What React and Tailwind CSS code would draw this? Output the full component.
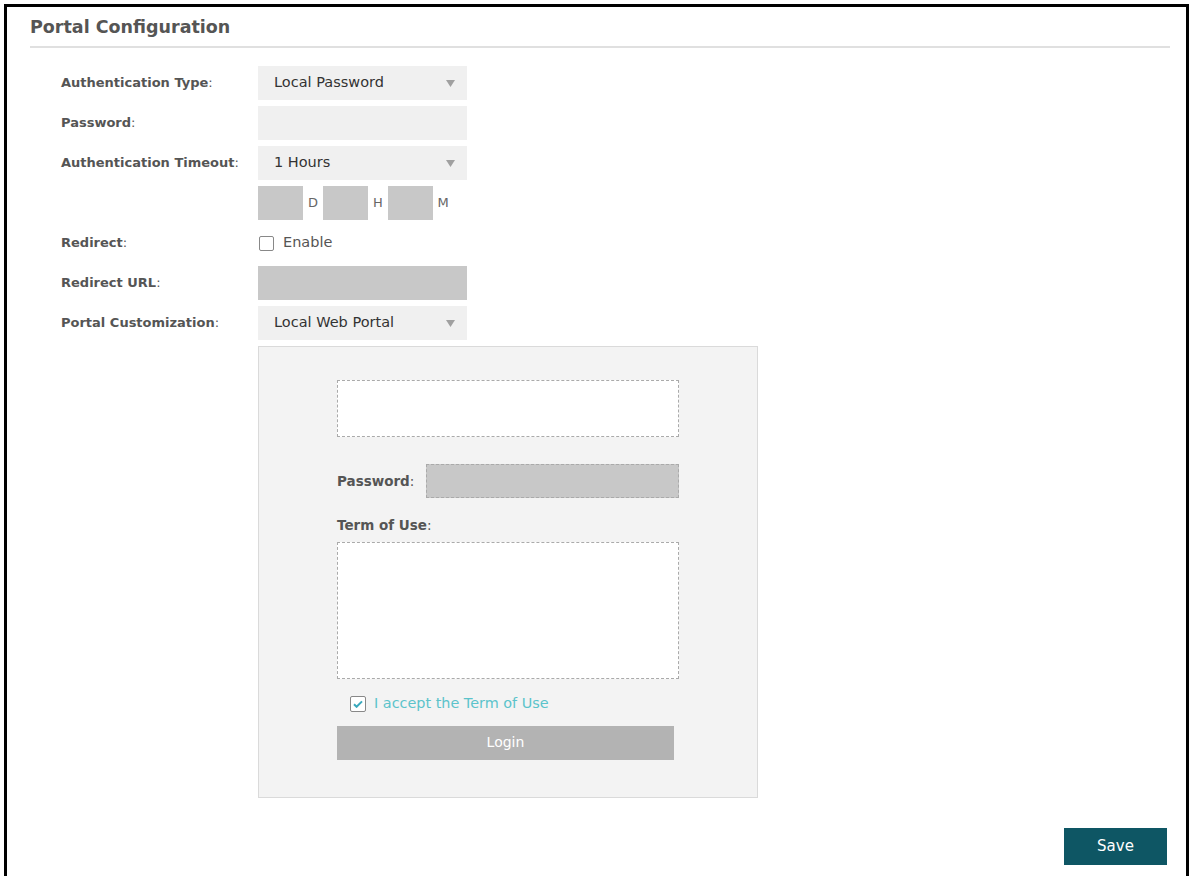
import React from 'react';

const font = { fontFamily: '"DejaVu Sans", Verdana, sans-serif' };

const Caret = () => (
  <svg width="9" height="7" viewBox="0 0 9 7" className="shrink-0">
    <path d="M0 0h9L4.5 7z" fill="#a0a0a0" />
  </svg>
);

const Select = ({ value }) => (
  <div className="flex h-[34px] w-[209px] items-center justify-between bg-[#f0f0f0] pl-4 pr-3 text-[14.5px] text-[#333]">
    <span>{value}</span>
    <Caret />
  </div>
);

const Row = ({ label, children, className = '' }) => (
  <div className={`flex items-center ${className}`}>
    <div className="w-[197px] shrink-0 text-[13px] font-bold text-[#555]">
      {label}
      {label && <span className="font-normal">:</span>}
    </div>
    {children}
  </div>
);

const App = () => {
  return (
    <div className="h-[876px] overflow-hidden bg-white pl-[4px] pr-px pt-[4px]" style={font}>
      <div className="relative h-[872px] border-l-[3px] border-r-[3px] border-t-[3px] border-black pl-[23px] pr-[16px] pt-[11px]">
        <h1 className="border-b-2 border-[#e0e0e0] pb-[10px] text-[17.5px] font-bold leading-[18px] text-[#555]">
          Portal Configuration
        </h1>

        <div className="flex flex-col gap-[6px] pl-[31px] pt-[18px]">
          <Row label="Authentication Type">
            <Select value="Local Password" />
          </Row>
          <Row label="Password">
            <div className="h-[34px] w-[209px] bg-[#f0f0f0]" />
          </Row>
          <Row label="Authentication Timeout">
            <Select value="1 Hours" />
          </Row>
          <Row label="">
            <div className="flex items-center text-[13px] text-[#666]">
              <div className="h-[34px] w-[45px] bg-[#c8c8c8]" />
              <span className="w-[20px] text-center">D</span>
              <div className="h-[34px] w-[45px] bg-[#c8c8c8]" />
              <span className="w-[20px] text-center">H</span>
              <div className="h-[34px] w-[45px] bg-[#c8c8c8]" />
              <span className="w-[20px] text-center">M</span>
            </div>
          </Row>
          <Row label="Redirect" className="h-[34px]">
            <label className="flex items-center gap-[9px] pl-px text-[14.5px] text-[#555]">
              <span className="h-[15px] w-[15px] rounded-[2px] border border-[#888] bg-white" />
              Enable
            </label>
          </Row>
          <Row label="Redirect URL">
            <div className="h-[34px] w-[209px] bg-[#c8c8c8]" />
          </Row>
          <Row label="Portal Customization">
            <Select value="Local Web Portal" />
          </Row>

          <div className="ml-[197px] flex h-[452px] w-[500px] flex-col border border-[#dadada] bg-[#f3f3f3] pl-[78px] pt-[33px]">
            <div className="h-[57px] w-[342px] border border-dashed border-[#aaa] bg-white" />
            <div className="mt-[27px] flex items-center">
              <span className="w-[89px] text-[13.5px] font-bold text-[#555]">
                Password<span className="font-normal">:</span>
              </span>
              <div className="h-[34px] w-[253px] border border-dashed border-[#aaa] bg-[#c8c8c8]" />
            </div>
            <div className="mt-[17px] text-[13.5px] font-bold text-[#555]">
              Term of Use<span className="font-normal">:</span>
            </div>
            <div className="mt-[7px] h-[137px] w-[342px] border border-dashed border-[#aaa] bg-white" />
            <label className="mt-[14px] flex items-center gap-[8px] pl-[13px] text-[14.4px] text-[#5bc3cb]">
              <span className="flex h-[16px] w-[16px] items-center justify-center rounded-[2px] border border-[#888] bg-white">
                <svg width="10" height="8" viewBox="0 0 10 8">
                  <path d="M1 4.2l2.6 2.6L9 1.4" stroke="#3aa9bd" strokeWidth="2" fill="none" />
                </svg>
              </span>
              I accept the Term of Use
            </label>
            <button className="mt-[11px] h-[34px] w-[337px] bg-[#b3b3b3] text-[14px] text-white">
              Login
            </button>
          </div>
        </div>

        <button className="absolute bottom-[11px] right-[19px] h-[37px] w-[103px] bg-[#0e5664] text-[15px] text-white">
          Save
        </button>
      </div>
    </div>
  );
};

export default App;
